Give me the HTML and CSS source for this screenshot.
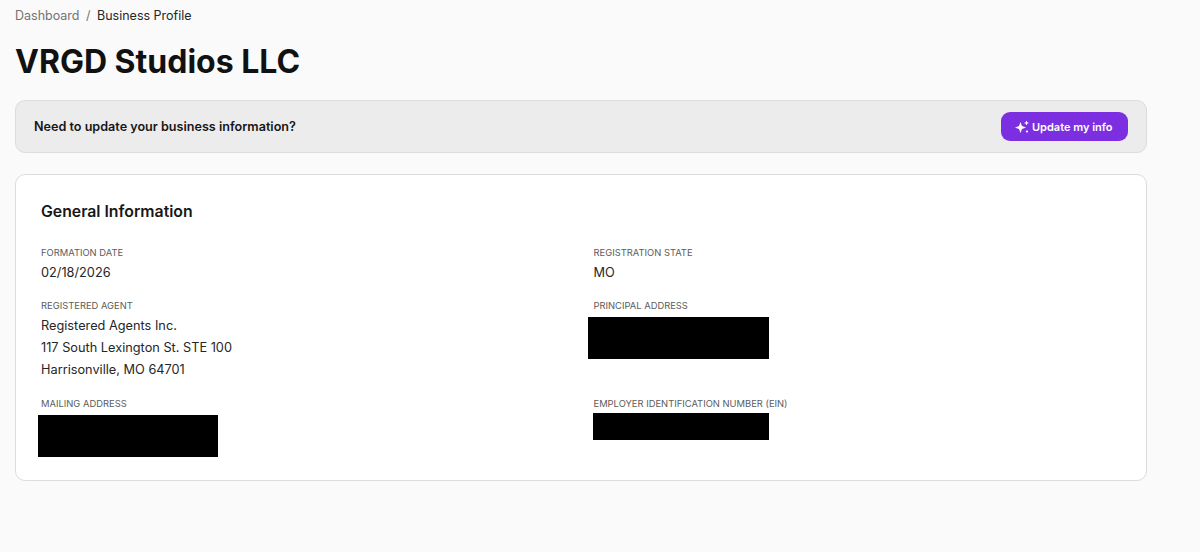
FILE: index.html
```html
<!DOCTYPE html>
<html lang="en">
<head>
  <meta charset="UTF-8">
  <title>Business Profile</title>
  <link rel="stylesheet" href="styles.css">
</head>
<body>
  <div class="page">
    <nav class="breadcrumb">
      <a href="#">Dashboard</a>
      <span class="sep">/</span>
      <span class="current">Business Profile</span>
    </nav>

    <h1>VRGD Studios LLC</h1>

    <div class="notice">
      <p>Need to update your business information?</p>
      <button type="button" class="update-btn">
        <svg width="16" height="16" viewBox="0 0 16 16" fill="#fff">
          <path d="M6.5 3 8 7l4 1.5L8 10l-1.500 4L5 10 1 8.500 5 7z"/>
          <path d="M12.500 1.500l.7 1.800 1.800.7-1.800.7-.7 1.800-.7-1.800L10 4l1.800-.7z"/>
          <circle cx="13" cy="12.500" r="1.100"/>
        </svg>
        Update my info
      </button>
    </div>

    <section class="card">
      <h2>General Information</h2>
      <div class="info-grid">
        <div class="field">
          <div class="label">Formation Date</div>
          <div class="value">02/18/2026</div>
        </div>
        <div class="field">
          <div class="label">Registration State</div>
          <div class="value">MO</div>
        </div>
        <div class="field">
          <div class="label">Registered Agent</div>
          <div class="value">Registered Agents Inc.</div>
          <div class="value">117 South Lexington St. STE 100</div>
          <div class="value">Harrisonville, MO 64701</div>
        </div>
        <div class="field">
          <div class="label">Principal Address</div>
          <div class="redacted redacted-address"></div>
        </div>
        <div class="field">
          <div class="label">Mailing Address</div>
          <div class="redacted redacted-mailing"></div>
        </div>
        <div class="field">
          <div class="label">Employer Identification Number (EIN)</div>
          <div class="redacted redacted-ein"></div>
        </div>
      </div>
    </section>
  </div>
</body>
</html>
```

FILE: styles.css
```css
body {
  margin: 0;
  font-family: Inter, "Liberation Sans", sans-serif;
  background-color: #fafafa;
  color: #171717;
}

.page {
  width: 1132px;
  padding: 7px 0 0 15px;
}

.breadcrumb {
  font-size: 12.5px;
  line-height: 17px;
  color: #262626;
}

.breadcrumb a {
  color: #737373;
  text-decoration: none;
}

.breadcrumb .sep {
  color: #737373;
  margin: 0 3px;
}

h1 {
  margin: 13px 0 0;
  font-size: 32px;
  line-height: 50px;
  font-weight: 700;
  color: #111;
}

.notice {
  display: flex;
  align-items: center;
  justify-content: space-between;
  height: 53px;
  margin-top: 13px;
  padding: 0 18px;
  box-sizing: border-box;
  background-color: #ececec;
  border: 1px solid #dcdcdc;
  border-radius: 10px;
}

.notice p {
  margin: 0;
  font-size: 12.6px;
  font-weight: 600;
}

.update-btn {
  display: flex;
  align-items: center;
  gap: 2px;
  height: 29px;
  width: 127px;
  padding: 0 0 0 13px;
  box-sizing: border-box;
  font-family: inherit;
  font-size: 11px;
  font-weight: 600;
  color: #fff;
  background-color: #7c2fe0;
  border: none;
  border-radius: 9px;
}

.card {
  height: 307px;
  margin-top: 21px;
  padding: 27px 25px 0;
  box-sizing: border-box;
  background-color: #fff;
  border: 1px solid #dcdcdc;
  border-radius: 10px;
}

h2 {
  margin: 0;
  font-size: 15.8px;
  line-height: 20px;
  font-weight: 600;
}

.info-grid {
  display: grid;
  grid-template-columns: 1fr 1fr;
  grid-template-rows: 38px 83px auto;
  column-gap: 25px;
  row-gap: 15px;
  margin-top: 24px;
}

.label {
  font-size: 9.4px;
  line-height: 14px;
  text-transform: uppercase;
  color: #5c5c5c;
}

.value {
  font-size: 12.75px;
  line-height: 22px;
  color: #262626;
}

.label + .value {
  margin-top: 2px;
}

.redacted {
  background-color: #000;
}

.redacted-address {
  width: 181px;
  height: 42px;
  margin: 4px 0 0 -6px;
}

.redacted-mailing {
  width: 180px;
  height: 42px;
  margin: 4px 0 0 -3px;
}

.redacted-ein {
  width: 176px;
  height: 27px;
  margin: 2px 0 0 -1px;
}
```
